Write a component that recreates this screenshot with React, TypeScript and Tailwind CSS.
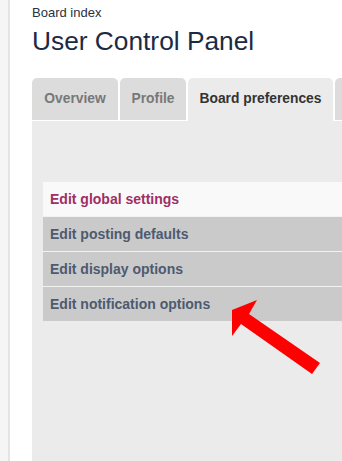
import React from 'react'

const tabs = [
  { label: 'Overview', w: 'w-[86px]' },
  { label: 'Profile', w: 'w-[66px]' },
  { label: 'Board preferences', w: 'w-[145px]', active: true },
  { label: '', w: 'w-[120px]' },
]

const menu = [
  { label: 'Edit global settings', active: true },
  { label: 'Edit posting defaults' },
  { label: 'Edit display options' },
  { label: 'Edit notification options' },
]

const App = () => {
  return (
    <div className="flex h-[461px] w-[342px] overflow-hidden bg-white font-['Liberation_Sans',Arial,sans-serif]">
      <div className="w-[8px] shrink-0 bg-[#f5f5f5]" />
      <div className="w-[2px] shrink-0 bg-[#e4e4e4]" />
      <div className="flex min-w-0 flex-1 flex-col pl-[22px]">
        <div className="mt-[4px] h-[17px] text-[13px] leading-[17px] text-[#28313f]">Board index</div>
        <h2 className="mt-[5px] h-[30px] text-[26.3px] leading-[30px] whitespace-nowrap text-[#1d2a44]">User Control Panel</h2>

        <div className="mt-[22px] flex gap-[2px]">
          {tabs.map((t, i) => (
            <div
              key={i}
              className={
                t.active
                  ? `${t.w} h-[43px] shrink-0 rounded-t-[5px] bg-[#ebebeb] flex items-center justify-center text-[13.8px] font-bold whitespace-nowrap text-[#333]`
                  : `${t.w} h-[42px] shrink-0 rounded-t-[5px] bg-[#dcdcdc] flex items-center justify-center text-[13.8px] font-bold whitespace-nowrap text-[#787878] border-b border-white box-content`
              }
            >
              {t.label}
            </div>
          ))}
        </div>

        <div className="relative flex-1 bg-[#ebebeb] pt-[61px] pl-[11px]">
          <ul className="flex flex-col gap-px bg-[#f2f2f2]">
            {menu.map(m => (
              <li
                key={m.label}
                className={
                  m.active
                    ? 'h-[34px] bg-[#f9f9f9] pl-[7px] flex items-center text-[14px] font-bold whitespace-nowrap text-[#9e2f64]'
                    : 'h-[34px] bg-[#cacaca] pl-[7px] flex items-center text-[14px] font-bold whitespace-nowrap text-[#4d5a70]'
                }
              >
                {m.label}
              </li>
            ))}
          </ul>

          <svg
            className="absolute left-[190px] top-[170px]"
            width="100"
            height="90"
            viewBox="222 290 100 90"
          >
            <polygon
              points="232,309 257,299 249,313 320,362 312,373 241,323 232,335"
              fill="#ff0000"
            />
          </svg>
        </div>
      </div>
    </div>
  )
}

export default App
